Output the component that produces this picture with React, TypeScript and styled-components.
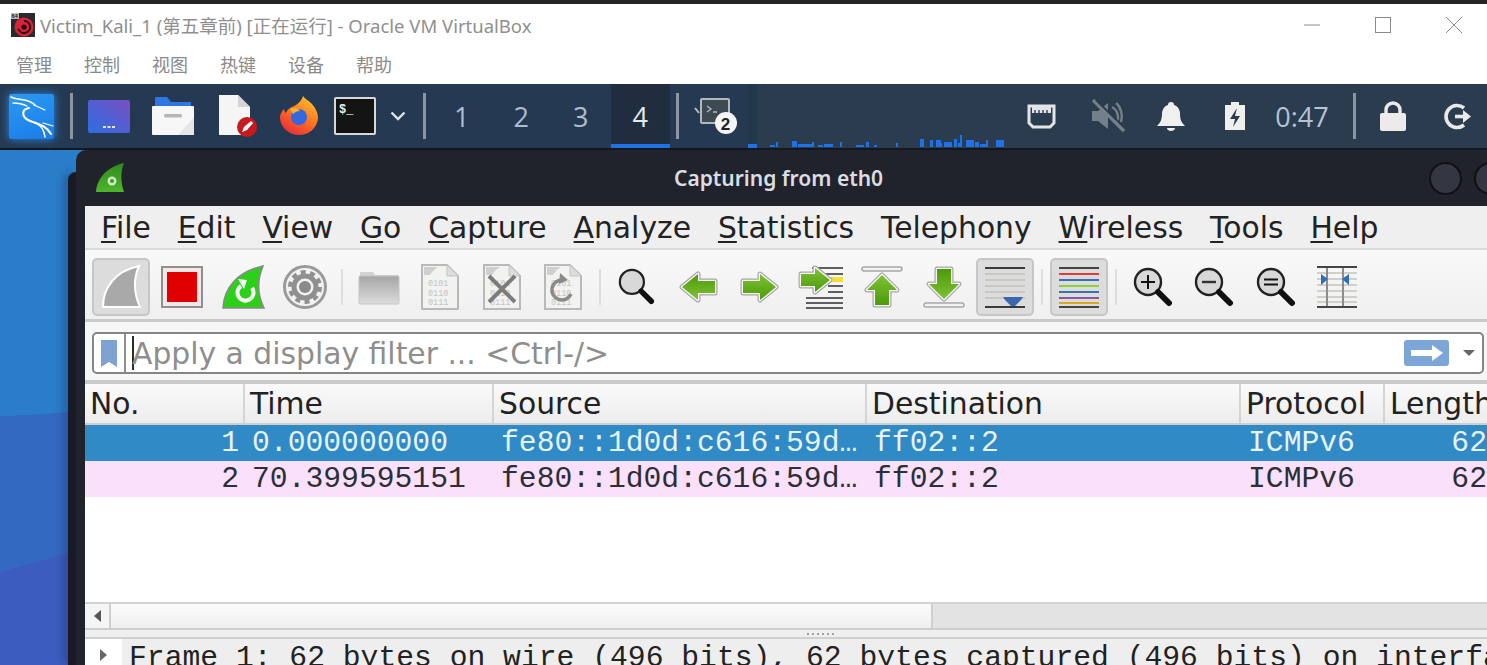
import React from 'react';
import styled, { createGlobalStyle } from 'styled-components';

const GlobalStyle = createGlobalStyle`
  html, body {
    margin: 0;
    padding: 0;
    background: #1f1f1f;
    overflow: hidden;
  }
  * { box-sizing: border-box; }
`;

const CJK = `"Noto Sans", "Noto Sans CJK SC", sans-serif`;
const SANS = `"DejaVu Sans", sans-serif`;
const MONO = `"Liberation Mono", monospace`;

const Page = styled.div`
  width: 1487px;
  height: 665px;
  overflow: hidden;
  display: flex;
  flex-direction: column;
`;

const TopStrip = styled.div`
  height: 4px;
  flex: none;
  background: #242424;
`;

const HostTitleBar = styled.div`
  height: 44px;
  flex: none;
  background: #fff;
  display: flex;
  align-items: center;
  padding: 0 0 3px 11px;
  font-family: ${CJK};
  font-size: 18.5px;
  color: #8f8f8f;
`;

const HostTitle = styled.span`
  margin-left: 5px;
  white-space: nowrap;
`;

const WindowControls = styled.div`
  margin-left: auto;
  margin-right: -2px;
  display: flex;
  align-items: center;
`;

const WindowControl = styled.div`
  width: 71px;
  height: 41px;
  display: flex;
  align-items: center;
  justify-content: center;
`;

const HostMenu = styled.div`
  height: 36px;
  flex: none;
  background: #fff;
  display: flex;
  align-items: center;
  padding: 0 0 4px 16px;
  gap: 32px;
  font-family: ${CJK};
  font-size: 18px;
  color: #8a8a8a;
`;

const Panel = styled.div`
  height: 66px;
  flex: none;
  display: flex;
  background: #2b3c4e;
  border-bottom: 2px solid #15181f;
`;

const PanelLeft = styled.div`
  display: flex;
  background: #253a52;
`;

const LogoSlot = styled.div`
  width: 62px;
  display: flex;
  align-items: center;
  justify-content: center;
`;

const KaliTile = styled.div`
  width: 45px;
  height: 45px;
  background: linear-gradient(160deg, #2b9bf4, #1a7be8);
  box-shadow: 0 0 9px #2a8cf0;
  border-radius: 2px;
`;

const PanelItem = styled.div<{ $w: number }>`
  width: ${p => p.$w}px;
  flex: none;
  display: flex;
  align-items: center;
  justify-content: center;
`;

const PanelSep = styled.div<{ $w: number }>`
  width: ${p => p.$w}px;
  flex: none;
  display: flex;
  align-items: center;
  justify-content: center;
  &::before {
    content: '';
    width: 3px;
    height: 46px;
    background: #8d969e;
  }
`;

const Workspace = styled.div<{ $active?: boolean }>`
  width: 59.5px;
  flex: none;
  display: flex;
  align-items: center;
  justify-content: center;
  font-family: "Open Sans", sans-serif;
  font-size: 27px;
  color: ${p => (p.$active ? '#e6e9ec' : '#aebccb')};
  background: ${p => (p.$active ? '#202d3e' : 'transparent')};
  border-bottom: 4px solid ${p => (p.$active ? '#1f72e6' : 'transparent')};
  border-top: 4px solid transparent;
`;

const GraphStub = styled.div`
  width: 9px;
  flex: none;
  background: #22364c;
  border-bottom: 4px solid #1f72e6;
`;

const Graph = styled.div`
  width: 235px;
  margin-left: 13px;
  flex: none;
  display: flex;
  align-items: flex-end;
  padding-bottom: 1px;
`;

const PanelRight = styled.div`
  margin-left: 5px;
  display: flex;
  flex: 1;
`;

const Clock = styled.div`
  width: 60px;
  flex: none;
  display: flex;
  align-items: center;
  justify-content: center;
  font-family: "Open Sans", sans-serif;
  font-size: 27px;
  color: #b4c4d4;
`;

const Desktop = styled.div`
  flex: 1;
  min-height: 0;
  display: flex;
  background:
    linear-gradient(164deg, transparent 0 406px, #3c5cc0 406px),
    linear-gradient(176.5deg, #2a7dc9 0 266px, #3469c2 266px);
`;

const DesktopGutter = styled.div`
  width: 68px;
  flex: none;
`;

const WindowEdge = styled.div`
  width: 8px;
  flex: none;
  margin-top: 22px;
  background: #181b25;
  border-radius: 8px 0 0 0;
  box-shadow: -4px 0 8px rgba(20, 30, 70, 0.35);
`;

const AppWindow = styled.div`
  width: 1432px;
  flex: none;
  background: #20232c;
  border-radius: 10px 0 0 0;
  display: flex;
  flex-direction: column;
  padding-left: 9px;
`;

const AppTitleBar = styled.div`
  height: 56px;
  flex: none;
  display: flex;
  align-items: center;
  padding-left: 10px;
`;

const AppTitle = styled.div`
  margin-left: 549px;
  width: 212px;
  font-family: "Noto Sans", sans-serif;
  font-weight: 600;
  font-size: 21px;
  color: #dcdde0;
  white-space: nowrap;
`;

const TitleButtons = styled.div`
  margin-left: 542.5px;
  display: flex;
  gap: 12px;
`;

const TitleButton = styled.div`
  width: 33px;
  height: 33px;
  flex: none;
  border-radius: 50%;
  background: #343641;
  border: 2px solid #101116;
`;

const AppBody = styled.div`
  flex: 1;
  min-height: 0;
  background: #f6f6f6;
  display: flex;
  flex-direction: column;
`;

const MenuBar = styled.div`
  height: 44px;
  flex: none;
  display: flex;
  align-items: center;
  padding: 1px 0 0 16px;
  gap: 26.9px;
  background: #efefef;
  border-bottom: 2px solid #d9d9d9;
  font-family: ${SANS};
  font-size: 29.8px;
  color: #222;
`;

const MenuItem = styled.span`
  white-space: nowrap;
  & u {
    text-underline-offset: 3px;
    text-decoration-thickness: 2px;
  }
`;

const ToolBar = styled.div`
  height: 72px;
  flex: none;
  display: flex;
  align-items: center;
  padding: 4px 0 0 5.3px;
  background: linear-gradient(#f9f9f9, #efefef);
  border-bottom: 3px solid #c9c9c9;
`;

const ToolButton = styled.div<{ $active?: boolean }>`
  width: 58px;
  height: 58px;
  margin: 0 1.7px;
  flex: none;
  display: flex;
  align-items: center;
  justify-content: center;
  border-radius: 5px;
  background: ${p => (p.$active ? '#dcdcdc' : 'transparent')};
  border: 2px solid ${p => (p.$active ? '#c6c6c6' : 'transparent')};
`;

const ToolSep = styled.div`
  width: 12.5px;
  flex: none;
  display: flex;
  justify-content: center;
  &::before {
    content: '';
    width: 2px;
    height: 36px;
    background: #dedede;
  }
`;

const FilterRow = styled.div`
  height: 62px;
  flex: none;
  display: flex;
  align-items: center;
  padding: 4px 0 0 7px;
  background: #f6f6f6;
  border-bottom: 4px solid #c9c9c9;
`;

const FilterBox = styled.div`
  width: 1392px;
  height: 42px;
  flex: none;
  display: flex;
  align-items: center;
  background: #fff;
  border: 2px solid #858585;
  border-radius: 5px;
`;

const BookmarkSlot = styled.div`
  width: 32px;
  height: 100%;
  flex: none;
  display: flex;
  align-items: center;
  justify-content: center;
  border-right: 2px solid #8f8f8f;
`;

const FilterInput = styled.div`
  flex: 1;
  margin-left: 6px;
  height: 34px;
  display: flex;
  align-items: center;
  border-left: 2px solid #2c2c2c;
  font-family: ${SANS};
  font-size: 29.8px;
  color: #8e8e8e;
  white-space: nowrap;
`;

const Placeholder = styled.span`
  margin-left: -2px;
`;

const ApplyButton = styled.div`
  width: 45px;
  height: 26px;
  flex: none;
  margin-right: 14px;
  display: flex;
  align-items: center;
  justify-content: center;
  border-radius: 3px;
  background: #7ca5d8;
`;

const DropCaret = styled.div`
  width: 0;
  height: 0;
  flex: none;
  margin-right: 7px;
  border-left: 6px solid transparent;
  border-right: 6px solid transparent;
  border-top: 6px solid #666;
`;

const columns = '160px 249px 373px 374px 144px 108px';

const HeaderRow = styled.div`
  height: 41px;
  flex: none;
  display: grid;
  grid-template-columns: ${columns};
  background: linear-gradient(#fafafa, #ececec);
  border-bottom: 2px solid #cfcfcf;
  font-family: ${SANS};
  font-size: 29.8px;
  color: #222;
`;

const HeaderCell = styled.div`
  display: flex;
  align-items: center;
  padding-left: 5px;
  border-right: 2px solid #d5d5d5;
  white-space: nowrap;
`;

const PacketRow = styled.div<{ $selected?: boolean }>`
  height: 36px;
  flex: none;
  display: grid;
  grid-template-columns: ${columns};
  align-items: center;
  background: ${p => (p.$selected ? '#2f8ac6' : '#fbe0fb')};
  color: ${p => (p.$selected ? '#e6f2fa' : '#2b2f36')};
  font-family: ${MONO};
  font-size: 29.7px;
`;

const PacketCell = styled.div<{ $right?: boolean }>`
  padding: 0 6px 0 7px;
  white-space: nowrap;
  overflow: hidden;
  text-align: ${p => (p.$right ? 'right' : 'left')};
`;

const PacketArea = styled.div`
  flex: 1;
  min-height: 0;
  background: #fff;
`;

const HScroll = styled.div`
  height: 28px;
  flex: none;
  display: flex;
  background: #e3e3e3;
  border-top: 2px solid #d2d2d2;
  border-bottom: 2px solid #cdcdcd;
`;

const ScrollArrow = styled.div`
  width: 26px;
  flex: none;
  display: flex;
  align-items: center;
  justify-content: center;
  background: #f5f5f5;
  border-right: 2px solid #d0d0d0;
  &::before {
    content: '';
    border-top: 6px solid transparent;
    border-bottom: 6px solid transparent;
    border-right: 7px solid #555;
  }
`;

const ScrollThumb = styled.div`
  width: 822px;
  flex: none;
  background: linear-gradient(#fbfbfb, #eeeeee);
  border-right: 2px solid #cfcfcf;
`;

const Splitter = styled.div`
  height: 9px;
  flex: none;
  display: flex;
  align-items: center;
  justify-content: flex-start;
  padding-left: 722px;
  background: #efefef;
  border-bottom: 2px solid #cfcfcf;
  &::before {
    content: '';
    width: 30px;
    height: 2px;
    background: repeating-linear-gradient(90deg, #a0a0a0 0 2px, transparent 2px 5px);
  }
`;

const DetailRow = styled.div`
  flex: none;
  height: 26px;
  display: flex;
  background: #fff;
`;

const Expander = styled.div`
  width: 37px;
  flex: none;
  display: flex;
  align-items: center;
  justify-content: center;
  padding-top: 6px;
  &::before {
    content: '';
    border-top: 6px solid transparent;
    border-bottom: 6px solid transparent;
    border-left: 7px solid #666;
  }
`;

const DetailText = styled.div`
  flex: 1;
  padding-left: 7px;
  background: #eeeeee;
  font-family: ${MONO};
  font-size: 29.7px;
  line-height: 38px;
  color: #222;
  white-space: nowrap;
  overflow: hidden;
`;

/* ---------- drawings ---------- */

const VBoxIcon = () => (
  <svg width="24" height="24" viewBox="0 0 24 24">
    <rect width="24" height="24" fill="#2a2a2e" />
    <circle cx="13" cy="14" r="9.500" fill="#d8243a" />
    <path d="M13 8a6 6 0 1 1-5.500 8" fill="none" stroke="#2a0a10" strokeWidth="2" />
    <circle cx="13" cy="14" r="2.600" fill="#2a0a10" />
    <rect width="8" height="6" fill="#bdbdbd" />
    <text x="0.600" y="5.300" fontSize="5.600" fontWeight="700" fontFamily="Liberation Sans" fill="#222">64</text>
  </svg>
);

const KaliDragon = () => (
  <svg width="45" height="45" viewBox="0 0 45 45" fill="none" stroke="#fff" strokeLinecap="round">
    <path d="M2 3C10 7 19 4 26 11" strokeWidth="1.600" />
    <path d="M4 9C10 9 14 10 18 12" strokeWidth="1.300" />
    <path d="M20 14C13 15 12 22 19 26C27 30 36 30 42 40" strokeWidth="2.100" />
    <path d="M27 29C32 31 35 36 36 43" strokeWidth="1.500" />
    <path d="M25 11L36 16" strokeWidth="1.300" />
    <path d="M34 29L44 32" strokeWidth="1.200" />
  </svg>
);

const WorkspaceSwitcher = () => (
  <svg width="42" height="33" viewBox="0 0 42 33">
    <defs>
      <linearGradient id="wsGrad" x1="0" y1="1" x2="1" y2="0">
        <stop offset="0" stopColor="#2a6fe0" />
        <stop offset="1" stopColor="#7a4fc4" />
      </linearGradient>
    </defs>
    <rect width="42" height="33" rx="2" fill="url(#wsGrad)" />
    <rect x="15" y="26" width="3" height="2" fill="#dfe6f8" />
    <rect x="19.500" y="26" width="3" height="2" fill="#dfe6f8" />
    <rect x="24" y="26" width="3" height="2" fill="#dfe6f8" />
  </svg>
);

const FilesIcon = () => (
  <svg width="42" height="38" viewBox="0 0 42 38">
    <path d="M3 0h12l4 5h20v6H3z" fill="#2f77e0" />
    <rect y="9" width="42" height="29" rx="1" fill="#f7f7f7" />
    <path d="M26 38L42 20v18z" fill="#e6e6e6" />
    <rect x="12" y="17" width="18" height="3.500" rx="1.500" fill="#b5b5b5" />
  </svg>
);

const TextEditorIcon = () => (
  <svg width="40" height="42" viewBox="0 0 40 42">
    <path d="M1 0h19l12 12v28H1z" fill="#f5f5f5" />
    <path d="M20 0l12 12H20z" fill="#d4d4d4" />
    <circle cx="29" cy="32" r="10" fill="#c71a1f" />
    <path d="M24 37l2-5 7-6 2 2-6 7z" fill="#fff" />
  </svg>
);

const FirefoxIcon = () => (
  <svg width="40" height="40" viewBox="0 0 40 40">
    <defs>
      <linearGradient id="ffGrad" x1="0.800" y1="0" x2="0.200" y2="1">
        <stop offset="0" stopColor="#ffc62c" />
        <stop offset="0.450" stopColor="#ff7a22" />
        <stop offset="1" stopColor="#e8263a" />
      </linearGradient>
    </defs>
    <path d="M24 0c2 3 5 4 9 8 4 5 6 9 6 14a19 18 0 1 1-38-2c1-3 2-5 4-7 0 2 1 3 2 4 2-5 6-6 10-8 3-2 6-5 7-9z" fill="url(#ffGrad)" />
    <circle cx="20" cy="21" r="8" fill="#3467e0" />
    <path d="M11 13c4-2 8-1 10 2-3 0-5 1-7 3z" fill="#ffb12e" />
  </svg>
);

const TerminalIcon = () => (
  <svg width="42" height="38" viewBox="0 0 42 38">
    <rect x="1" y="1" width="40" height="36" rx="1" fill="#141414" stroke="#d8d8d8" strokeWidth="2" />
    <text x="5" y="16" fontSize="12" fontWeight="700" fontFamily="Liberation Mono" fill="#eee">$_</text>
  </svg>
);

const Chevron = () => (
  <svg width="16" height="10" viewBox="0 0 16 10">
    <path d="M1.500 1.500L8 8l6.500-6.500" fill="none" stroke="#dfe3e7" strokeWidth="2.400" />
  </svg>
);

const TerminalBadge = () => (
  <svg width="44" height="38" viewBox="0 0 44 38">
    <path d="M1 11l4 5" stroke="#b6bcc2" strokeWidth="2" />
    <rect x="7" y="2" width="28" height="24" rx="1" fill="#3e4a52" stroke="#b2b8bd" strokeWidth="2" />
    <path d="M13 9l4 3-4 3M19 15h4" fill="none" stroke="#b2b8bd" strokeWidth="1.400" />
    <circle cx="32" cy="26" r="11" fill="#f4f4f4" />
    <text x="26.700" y="32.500" fontSize="17" fontWeight="700" fontFamily="Liberation Sans" fill="#222">2</text>
  </svg>
);

const NetworkIcon = () => (
  <svg width="29" height="25" viewBox="0 0 29 25">
    <path d="M2 2h25v17l-4 4H6l-4-4z" fill="none" stroke="#e2e5e7" strokeWidth="3" />
    <path d="M5 3h19v6H5z" fill="#e2e5e7" />
    <path d="M8 6v3M12 6v3M16 6v3M20 6v3" stroke="#2b3c4e" strokeWidth="1.400" />
  </svg>
);

const MutedIcon = () => (
  <svg width="34" height="34" viewBox="0 0 34 34" fill="none" stroke="#748089">
    <path d="M1 12h6l10-8v26l-10-8H1z" fill="#748089" stroke="none" />
    <path d="M21 8c6 3 8 12 4 18M25 4c5 4 7 12 5 19" strokeWidth="2.400" />
    <path d="M2 1l31 31" strokeWidth="3.400" />
    <path d="M5 1l29 28" stroke="#2b3c4e" strokeWidth="1.800" />
  </svg>
);

const BellIcon = () => (
  <svg width="28" height="30" viewBox="0 0 28 30">
    <path d="M14 1c2 0 3 1 3 3 4 1 6 5 6 9 0 6 2 9 5 12H0c3-3 5-6 5-12 0-4 2-8 6-9 0-2 1-3 3-3z" fill="#f0f0ee" />
    <path d="M10 27h8c0 2-2 3-4 3s-4-1-4-3z" fill="#f0f0ee" />
  </svg>
);

const BatteryIcon = () => (
  <svg width="20" height="28" viewBox="0 0 20 28">
    <path d="M6 0h8v3h6v25H0V3h6z" fill="#efefed" />
    <path d="M12 6l-7 11h5l-2 8 7-11h-5z" fill="#2b3c4e" />
  </svg>
);

const LockIcon = () => (
  <svg width="26" height="30" viewBox="0 0 26 30">
    <path d="M6 14V9a7 7 0 0 1 14 0v5" fill="none" stroke="#ecebe9" strokeWidth="3.400" />
    <rect y="12" width="26" height="18" rx="2" fill="#ecebe9" />
  </svg>
);

const LogoutIcon = () => (
  <svg width="28" height="27" viewBox="0 0 28 27" fill="none" stroke="#e8e9e8" strokeWidth="3.600">
    <path d="M20 5a11 11 0 1 0 0 17" />
    <path d="M11 13.500h10" />
    <path d="M19 7l8 6.500-8 6.500z" fill="#e8e9e8" stroke="none" />
  </svg>
);

const LoadBars = () => {
  const bars = [
    [0, 5, 2], [6, 2, 5], [22, 5, 6], [28, 14, 3], [42, 2, 5], [48, 5, 2], [54, 9, 3], [70, 2, 5],
    [86, 8, 2], [96, 3, 5], [104, 3, 2], [126, 2, 4], [150, 4, 8], [170, 2, 4], [176, 5, 3], [188, 2, 4],
    [198, 2, 5], [210, 6, 3], [216, 2, 7], [226, 8, 7], [235, 2, 5],
  ];
  return (
    <svg width="235" height="16" viewBox="0 0 235 16">
      {bars.map(([x, w, h]) => (
        <rect key={x} x={x} y={16 - h} width={w} height={h} fill="#1f72e6" />
      ))}
      <path d="M160 16V9h3v7zM166 16v-7h5v7zM174 16v-5h8v5zM184 16V8h3v8zM190 16V4h2v12zM196 16V9h8v7zM205 16v-5h4v5z" fill="#1f72e6" />
    </svg>
  );
};

const FinIcon = () => (
  <svg width="42" height="46" viewBox="0 0 42 46">
    <path d="M3 43C3 24 15 7 39 2C33 16 34 30 40 43z" fill="#a9a9a9" stroke="#fff" strokeWidth="2" />
  </svg>
);

const RestartIcon = () => (
  <svg width="46" height="46" viewBox="0 0 46 46">
    <path d="M2 44C3 24 16 8 42 2C36 16 36 30 43 44z" fill="#2bd018" stroke="#8a8a8a" strokeWidth="1.600" />
    <path d="M31 24a8 8 0 1 1-11-2" fill="none" stroke="#fff" strokeWidth="4" />
    <path d="M17 15l9 1-3 9z" fill="#fff" />
  </svg>
);

const StopIcon = () => (
  <svg width="42" height="42" viewBox="0 0 42 42">
    <rect x="1" y="1" width="40" height="40" fill="#f3e8e8" stroke="#8f8f8f" strokeWidth="2" />
    <rect x="6" y="6" width="30" height="30" fill="#e00000" />
  </svg>
);

const GearIcon = () => (
  <svg width="44" height="44" viewBox="0 0 44 44">
    <circle cx="22" cy="22" r="20.500" fill="#f2f2f2" stroke="#9a9a9a" strokeWidth="3" />
    <circle cx="22" cy="22" r="11" fill="none" stroke="#909090" strokeWidth="5" />
    <circle cx="22" cy="22" r="15" fill="none" stroke="#909090" strokeWidth="4" strokeDasharray="5 4.420" />
    <circle cx="22" cy="22" r="6" fill="#8a8a8a" />
  </svg>
);

const FolderIcon = () => (
  <svg width="42" height="36" viewBox="0 0 42 36">
    <defs>
      <linearGradient id="folderGrad" x1="0" y1="0" x2="0" y2="1">
        <stop offset="0" stopColor="#a5a5a5" />
        <stop offset="1" stopColor="#dcdcdc" />
      </linearGradient>
    </defs>
    <path d="M2 3h13l2 3h23v4H2z" fill="#d2d2d2" />
    <rect x="1" y="7" width="40" height="28" rx="1" fill="url(#folderGrad)" stroke="#c5c5c5" />
  </svg>
);

const CaptureFile = ({ children }: { children?: React.ReactNode }) => (
  <svg width="38" height="46" viewBox="0 0 38 46">
    <path d="M1 1h25l11 11v33H1z" fill="#f2f2f0" stroke="#b9b9b9" strokeWidth="2" />
    <path d="M26 1v11h11" fill="#dcdcdc" stroke="#c4c4c4" />
    <path d="M3 3h14c-4 2-6 5-8 8H3z" fill="#cfcfcf" />
    <g fill="#c4c4c4" fontFamily="Liberation Mono" fontSize="8.500">
      <text x="7" y="22">0101</text>
      <text x="7" y="32">0110</text>
      <text x="7" y="41">0111</text>
    </g>
    {children}
  </svg>
);

// green glyph with the grey rim and white halo the Wireshark toolbar arrows have
const Halo = ({ d, fill }: { d: string; fill: string }) => (
  <g strokeLinejoin="round">
    <path d={d} fill="none" stroke="#a6a6a6" strokeWidth="5" />
    <path d={d} fill="none" stroke="#f6f6f6" strokeWidth="2.600" />
    <path d={d} fill={fill} />
  </g>
);

const GreenGrad = ({ id }: { id: string }) => (
  <defs>
    <linearGradient id={id} x1="0" y1="0" x2="0" y2="1">
      <stop offset="0" stopColor="#7fc234" />
      <stop offset="1" stopColor="#4c9a0a" />
    </linearGradient>
  </defs>
);

const Arrow = ({ angle, id }: { angle: number; id: string }) => (
  <svg width="42" height="36" viewBox="0 0 42 36">
    <GreenGrad id={id} />
    <g transform={`rotate(${angle} 21 18)`}>
      <Halo d="M4 12h17V5l16 13-16 13v-7H4z" fill={`url(#${id})`} />
    </g>
  </svg>
);

const VArrow = ({ up, id }: { up?: boolean; id: string }) => (
  <svg width="42" height="42" viewBox="0 0 42 42">
    <GreenGrad id={id} />
    <g transform={up ? undefined : 'rotate(180 21 21)'}>
      <rect x="1" y="1" width="40" height="4" rx="2" fill="#f2f2f2" stroke="#a8a8a8" strokeWidth="1.500" />
      <Halo d="M21 9L36 24H28V39H14V24H6z" fill={`url(#${id})`} />
    </g>
  </svg>
);

const GoToIcon = () => (
  <svg width="46" height="44" viewBox="0 0 46 44">
    <GreenGrad id="gotoGrad" />
    <path d="M14 3h31M26 9h19M30 21h15M30 27h15M8 33h37M8 38h37M8 43h37" stroke="#2e2e2e" strokeWidth="1.600" />
    <rect x="30" y="12" width="15" height="5" fill="#f5df3a" />
    <Halo d="M3 9h14V3l15 12-15 12v-6H3z" fill="url(#gotoGrad)" />
  </svg>
);

const Magnifier = ({ mark, size = 40 }: { mark?: 'plus' | 'minus' | 'equal'; size?: number }) => (
  <svg width={size} height={size} viewBox="0 0 40 40">
    <circle cx="15" cy="15" r="13" fill="#d8d8d8" stroke="#222" strokeWidth="2.400" />
    <path d="M25 25l11 11" stroke="#111" strokeWidth="6" strokeLinecap="round" />
    {mark === 'plus' && <path d="M8 15h14M15 8v14" stroke="#111" strokeWidth="2" />}
    {mark === 'minus' && <path d="M8 15h14" stroke="#333" strokeWidth="2.400" />}
    {mark === 'equal' && <path d="M8 12.500h14M8 17.500h14" stroke="#111" strokeWidth="2.200" />}
  </svg>
);

const AutoScrollIcon = () => (
  <svg width="42" height="42" viewBox="0 0 42 42">
    <path d="M1 2h40M1 41h40" stroke="#3a3a3a" strokeWidth="2" />
    <path d="M1 8h40M1 14h40M1 20h40M1 26h40M1 32h40" stroke="#c8c8c0" strokeWidth="2" />
    <path d="M19 31h20l-2 3-6 6h-4l-6-6z" fill="#3a69ad" />
  </svg>
);

const ColorizeIcon = () => (
  <svg width="42" height="42" viewBox="0 0 42 42" strokeWidth="2">
    <path d="M1 2h40" stroke="#444" />
    <path d="M1 8h40" stroke="#e33a3a" />
    <path d="M1 14h40" stroke="#3a6fb0" />
    <path d="M1 20h40" stroke="#8ad03a" />
    <path d="M1 26h40" stroke="#3a6fb0" />
    <path d="M1 32h40" stroke="#8a5a9a" />
    <path d="M1 37h40" stroke="#d9a81c" />
    <path d="M1 41h40" stroke="#444" />
  </svg>
);

const ResizeColumnsIcon = () => (
  <svg width="42" height="42" viewBox="0 0 42 42">
    <path d="M1 1h40M1 41h40" stroke="#444" strokeWidth="2" />
    <path d="M1 7h40M1 13h40M1 19h40M1 25h40M1 31h40M1 36h40" stroke="#d0d0c8" strokeWidth="2" />
    <path d="M11 2v38M27 2v38" stroke="#8c8c8c" strokeWidth="2" />
    <path d="M5 8l7 5-7 6zM33 8l-7 5 7 6z" fill="#2e6fbd" />
  </svg>
);

const Bookmark = () => (
  <svg width="16" height="27" viewBox="0 0 16 27">
    <path d="M0 0h16v27l-8-5-8 5z" fill="#7ea3d2" />
  </svg>
);

const ApplyArrow = () => (
  <svg width="32" height="16" viewBox="0 0 32 16">
    <path d="M0 5h21V0l11 8-11 8v-5H0z" fill="#fff" />
  </svg>
);

const WiresharkMark = () => (
  <svg width="30" height="30" viewBox="0 0 30 30">
    <defs>
      <linearGradient id="markGrad" x1="0" y1="0" x2="0" y2="1">
        <stop offset="0" stopColor="#2f8a1c" />
        <stop offset="1" stopColor="#4eb52c" />
      </linearGradient>
    </defs>
    <path d="M1 29C2 15 12 4 29 0C25 10 26 20 29 29z" fill="url(#markGrad)" />
    <circle cx="17" cy="18" r="4.500" fill="#cfe8c4" />
    <circle cx="17" cy="18" r="2" fill="#3b9c26" />
  </svg>
);

/* ---------- data ---------- */

const hostMenu = ['管理', '控制', '视图', '热键', '设备', '帮助'];

const appMenu: [string, string][] = [
  ['F', 'ile'], ['E', 'dit'], ['V', 'iew'], ['G', 'o'], ['C', 'apture'], ['A', 'nalyze'],
  ['S', 'tatistics'], ['', 'Telephony'], ['W', 'ireless'], ['T', 'ools'], ['H', 'elp'],
];

const headers = ['No.', 'Time', 'Source', 'Destination', 'Protocol', 'Length'];

const packets = [
  { no: 1, time: '0.000000000', selected: true },
  { no: 2, time: '70.399595151', selected: false },
];

export default function App() {
  return (
    <Page>
      <GlobalStyle />
      <TopStrip />
      <HostTitleBar>
        <VBoxIcon />
        <HostTitle>Victim_Kali_1 (第五章前) [正在运行] - Oracle VM VirtualBox</HostTitle>
        <WindowControls>
          <WindowControl>
            <svg width="16" height="16" viewBox="0 0 16 16"><path d="M0 8h16" stroke="#8a8a8a" strokeWidth="1" /></svg>
          </WindowControl>
          <WindowControl>
            <svg width="16" height="16" viewBox="0 0 16 16"><rect x="0.500" y="0.500" width="15" height="15" fill="none" stroke="#8a8a8a" /></svg>
          </WindowControl>
          <WindowControl>
            <svg width="16" height="16" viewBox="0 0 16 16"><path d="M0 0l16 16M16 0L0 16" stroke="#8a8a8a" strokeWidth="1" /></svg>
          </WindowControl>
        </WindowControls>
      </HostTitleBar>
      <HostMenu>
        {hostMenu.map(item => <span key={item}>{item}</span>)}
      </HostMenu>

      <Panel>
        <PanelLeft>
          <LogoSlot><KaliTile><KaliDragon /></KaliTile></LogoSlot>
          <PanelSep $w={18} />
          <PanelItem $w={58}><WorkspaceSwitcher /></PanelItem>
          <PanelItem $w={70}><FilesIcon /></PanelItem>
          <PanelItem $w={60}><TextEditorIcon /></PanelItem>
          <PanelItem $w={62}><FirefoxIcon /></PanelItem>
          <PanelItem $w={50}><TerminalIcon /></PanelItem>
          <PanelItem $w={36}><Chevron /></PanelItem>
          <PanelSep $w={16} />
          <Workspace>1</Workspace>
          <Workspace>2</Workspace>
          <Workspace>3</Workspace>
          <Workspace $active>4</Workspace>
          <PanelSep $w={14} />
          <PanelItem $w={64}><TerminalBadge /></PanelItem>
        </PanelLeft>
        <GraphStub />
        <Graph><LoadBars /></Graph>
        <PanelRight>
          <PanelItem $w={62}><NetworkIcon /></PanelItem>
          <PanelItem $w={72}><MutedIcon /></PanelItem>
          <PanelItem $w={54}><BellIcon /></PanelItem>
          <PanelItem $w={74}><BatteryIcon /></PanelItem>
          <Clock>0:47</Clock>
          <PanelSep $w={44} />
          <PanelItem $w={34}><LockIcon /></PanelItem>
          <PanelItem $w={95}><LogoutIcon /></PanelItem>
        </PanelRight>
      </Panel>

      <Desktop>
        <DesktopGutter />
        <WindowEdge />
        <AppWindow>
          <AppTitleBar>
            <WiresharkMark />
            <AppTitle>Capturing from eth0</AppTitle>
            <TitleButtons>
              <TitleButton />
              <TitleButton />
            </TitleButtons>
          </AppTitleBar>
          <AppBody>
            <MenuBar>
              {appMenu.map(([key, rest]) => (
                <MenuItem key={key + rest}>
                  {key && <u>{key}</u>}{rest}
                </MenuItem>
              ))}
            </MenuBar>
            <ToolBar>
              <ToolButton $active><FinIcon /></ToolButton>
              <ToolButton><StopIcon /></ToolButton>
              <ToolButton><RestartIcon /></ToolButton>
              <ToolButton><GearIcon /></ToolButton>
              <ToolSep />
              <ToolButton><FolderIcon /></ToolButton>
              <ToolButton><CaptureFile /></ToolButton>
              <ToolButton>
                <CaptureFile>
                  <path d="M6 12l26 26M32 12L6 38" stroke="#7c7c7c" strokeWidth="4" />
                </CaptureFile>
              </ToolButton>
              <ToolButton>
                <CaptureFile>
                  <path d="M27 30a10 10 0 1 1-8-14" fill="none" stroke="#8a8a8a" strokeWidth="3.500" />
                  <path d="M16 9l8 7-9 4z" fill="#8a8a8a" />
                </CaptureFile>
              </ToolButton>
              <ToolSep />
              <ToolButton><Magnifier size={37} /></ToolButton>
              <ToolButton><Arrow angle={180} id="leftGrad" /></ToolButton>
              <ToolButton><Arrow angle={0} id="rightGrad" /></ToolButton>
              <ToolButton><GoToIcon /></ToolButton>
              <ToolButton><VArrow up id="upGrad" /></ToolButton>
              <ToolButton><VArrow id="downGrad" /></ToolButton>
              <ToolButton $active><AutoScrollIcon /></ToolButton>
              <ToolSep />
              <ToolButton $active><ColorizeIcon /></ToolButton>
              <ToolSep />
              <ToolButton><Magnifier mark="plus" /></ToolButton>
              <ToolButton><Magnifier mark="minus" /></ToolButton>
              <ToolButton><Magnifier mark="equal" /></ToolButton>
              <ToolButton><ResizeColumnsIcon /></ToolButton>
            </ToolBar>
            <FilterRow>
              <FilterBox>
                <BookmarkSlot><Bookmark /></BookmarkSlot>
                <FilterInput><Placeholder>Apply a display filter ... &lt;Ctrl-/&gt;</Placeholder></FilterInput>
                <ApplyButton><ApplyArrow /></ApplyButton>
                <DropCaret />
              </FilterBox>
            </FilterRow>
            <HeaderRow>
              {headers.map(h => <HeaderCell key={h}>{h}</HeaderCell>)}
            </HeaderRow>
            {packets.map(p => (
              <PacketRow key={p.no} $selected={p.selected}>
                <PacketCell $right>{p.no}</PacketCell>
                <PacketCell>{p.time}</PacketCell>
                <PacketCell>fe80::1d0d:c616:59d…</PacketCell>
                <PacketCell>ff02::2</PacketCell>
                <PacketCell>ICMPv6</PacketCell>
                <PacketCell $right>62</PacketCell>
              </PacketRow>
            ))}
            <PacketArea />
            <HScroll>
              <ScrollArrow />
              <ScrollThumb />
            </HScroll>
            <Splitter />
            <DetailRow>
              <Expander />
              <DetailText>Frame 1: 62 bytes on wire (496 bits), 62 bytes captured (496 bits) on interface eth0, id 0</DetailText>
            </DetailRow>
          </AppBody>
        </AppWindow>
      </Desktop>
    </Page>
  );
}
